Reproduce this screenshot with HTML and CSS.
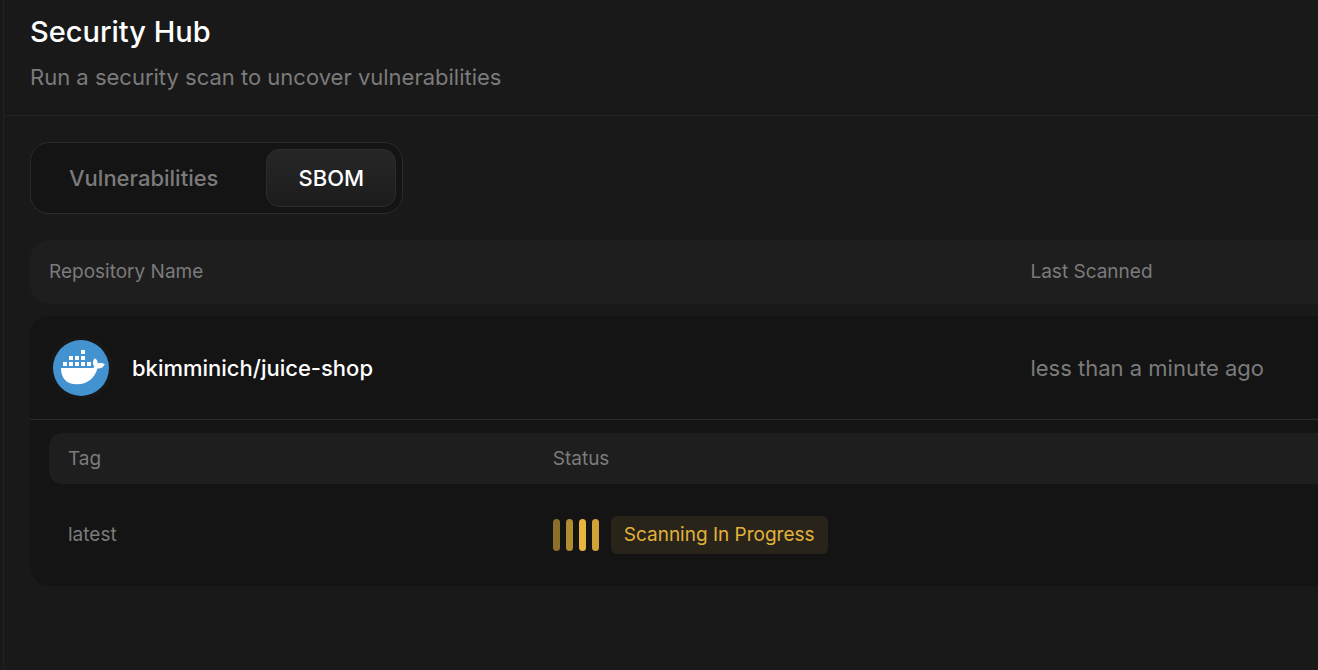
FILE: index.html
```html
<!doctype html>
<html lang="en">
<head>
	<meta charset="UTF-8">
	<title>Security Hub</title>
	<meta name="viewport" content="width=device-width, initial-scale=1">
	<link rel="stylesheet" href="styles.css">
</head>
<body>
	<main class="page">
		<header class="page-header">
			<h1>Security Hub</h1>
			<p>Run a security scan to uncover vulnerabilities</p>
		</header>
		<div class="content">
			<div class="tabs" role="tablist">
				<button class="tab" type="button" role="tab" aria-selected="false">Vulnerabilities</button>
				<button class="tab active" type="button" role="tab" aria-selected="true">SBOM</button>
			</div>
			<table class="repos">
				<thead>
					<tr>
						<th class="col-name" scope="col">Repository Name</th>
						<th scope="col">Last Scanned</th>
					</tr>
				</thead>
				<tbody>
					<tr class="repo">
						<td>
							<div class="repo-name">
								<span class="logo">
									<svg width="56" height="56" viewBox="0 0 56 56" aria-hidden="true">
										<circle cx="28" cy="28" r="28" fill="#4493d1"/>
										<g fill="#fff">
											<path d="M28 10h4v4h-4zM16 16h4v4h-4zM22 16h4v4h-4zM28 16h4v4h-4zM10 22h4v4h-4zM16 22h4v4h-4zM22 22h4v4h-4zM28 22h4v4h-4zM34 22h4v4h-4z"/>
											<path d="M8 28h30c2 0 3-.5 3.500-1.300C39.500 24.500 39.300 21 41.800 18.200c2 1.300 3 3.100 3 5.200 2.400-.8 5-.5 7.100.8-1.300 3-4 4.500-7.400 4.300C41.500 38 34.500 44.300 24 44.300 13.500 44.300 8 38.500 8 28z"/>
										</g>
									</svg>
								</span>
								bkimminich/juice-shop
							</div>
						</td>
						<td class="scanned">less than a minute ago</td>
					</tr>
					<tr class="details">
						<td colspan="2">
							<table class="tags">
								<thead>
									<tr>
										<th class="col-tag" scope="col">Tag</th>
										<th scope="col">Status</th>
									</tr>
								</thead>
								<tbody>
									<tr>
										<td>latest</td>
										<td>
											<div class="status">
												<span class="bars"><i></i><i></i><i></i><i></i></span>
												<span class="badge">Scanning In Progress</span>
											</div>
										</td>
									</tr>
								</tbody>
							</table>
						</td>
					</tr>
				</tbody>
			</table>
		</div>
	</main>
</body>
</html>
```
FILE: styles.css
```css
* {
	box-sizing: border-box;
}
body {
	margin: 0;
	padding-left: 3px;
	background: #191919;
	color: #7b7b7b;
	font-family: Inter, sans-serif;
	font-size: 19px;
	line-height: 24px;
}
.page {
	min-height: 100vh;
	border-left: 1px solid #222;
}
.page-header {
	padding: 14px 26px 22px;
	border-bottom: 1px solid #242424;
}
h1 {
	margin: 0 0 11px;
	color: #fff;
	font-size: 29px;
	font-weight: 500;
	line-height: 36px;
}
.page-header p {
	margin: 0;
	font-size: 22px;
	line-height: 32px;
}
.content {
	padding: 26px 0 26px 26px;
}
.tabs {
	display: inline-flex;
	gap: 16px;
	padding: 6px;
	border: 1px solid #2b2b2b;
	border-radius: 19px;
	background: #141414;
}
.tab {
	height: 58px;
	padding: 0 31px;
	border: 1px solid transparent;
	border-radius: 13px;
	background: none;
	color: #7b7b7b;
	font-family: inherit;
	font-size: 22px;
	font-weight: 500;
	cursor: pointer;
}
.tab.active {
	border-color: #2c2c2c;
	background: linear-gradient(#272727, #1c1c1c);
	color: #fff;
}
table {
	width: 100%;
	border-spacing: 0;
	table-layout: fixed;
}
th, td {
	padding: 0 19px;
	font-weight: 400;
	text-align: left;
}
.repos {
	margin-top: 26px;
}
.repos th {
	height: 64px;
	background: #1e1e1e;
}
.repos .col-name {
	width: 76.2%;
	border-radius: 19px 0 0 19px;
}
/* gap between the header bar and the repository card */
.repos > tbody::before {
	content: "";
	display: block;
	height: 12px;
}
.repo td {
	height: 104px;
	border-bottom: 1px solid #2b2b2b;
	background: #141414;
}
.repo td:first-child {
	border-top-left-radius: 19px;
}
.repo-name {
	display: flex;
	align-items: center;
	gap: 19px;
	color: #fff;
	font-size: 22px;
	font-weight: 500;
}
.logo {
	display: flex;
	padding: 4px;
	border-radius: 50%;
	background: #171717;
}
.scanned {
	font-size: 22px;
}
.details > td {
	padding: 13px 0 0 19px;
	border-bottom-left-radius: 19px;
	background: #141414;
}
.tags .col-tag,
.tags th {
	height: 51px;
}
.tags .col-tag {
	width: 38.2%;
	border-radius: 13px 0 0 13px;
}
.tags td {
	height: 102px;
}
.status {
	display: flex;
	align-items: center;
	gap: 12px;
}
.bars {
	display: flex;
	gap: 6px;
}
.bars i {
	width: 7px;
	height: 32px;
	border-radius: 4px;
	background: #8c7029;
}
.bars i:nth-child(2) {
	background: #b18c31;
}
.bars i:nth-child(3) {
	background: #e8b63c;
}
.bars i:nth-child(4) {
	background: #cfa337;
}
.badge {
	padding: 7px 13px;
	border-radius: 6px;
	background: #29241a;
	color: #e2b13c;
}
```
